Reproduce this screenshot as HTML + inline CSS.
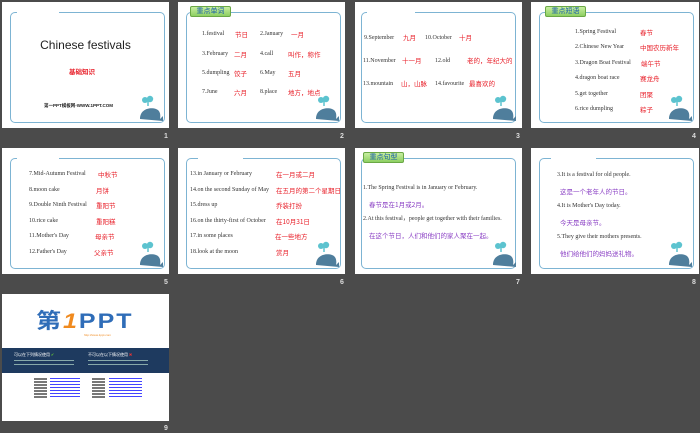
<!DOCTYPE html><html><head><meta charset="utf-8"><style>
*{margin:0;padding:0;box-sizing:border-box}
body{width:700px;height:433px;background:#4b4b4b;position:relative;overflow:hidden;font-family:"Liberation Serif","Noto Sans CJK SC",serif}
.s{position:absolute;width:167px;height:126px;background:#fff}
.f{position:absolute;left:8px;top:10px;width:155px;height:111px;border:1px solid #7db4d3;border-radius:5px}
.gap{position:absolute;left:15px;top:9px;width:42px;height:3px;background:#fff}
.n{position:absolute;color:#ddd;font:bold 7px "Liberation Sans",sans-serif}
.t{position:absolute;font-size:6px;line-height:1;color:#333;white-space:nowrap}
.r{position:absolute;font-size:6.5px;line-height:1;color:#e8202a;white-space:nowrap;font-family:"Noto Sans CJK SC",sans-serif}
.p{position:absolute;font-size:6.5px;line-height:1;color:#8a3fc4;white-space:nowrap;font-family:"Noto Sans CJK SC",sans-serif}
.tag{position:absolute;left:12px;top:4px;width:41px;height:11px;background:linear-gradient(#c8eea0,#8dcf62);border:1px solid #6aa845;border-radius:2px;font:7px/9px "Noto Sans CJK SC",sans-serif;color:#1a5fa8;text-align:center}
.w{position:absolute;left:134px;top:93px}
</style></head><body>
<svg width="0" height="0" style="position:absolute"><defs><g id="wh"><path d="M4 24 C4 14 14 12 20 14 C26 16 24 24 24 24 L27 21 L27 26 Z M4 24 L24 24" fill="#4f7e9c"/><path d="M12 11 L12 6" stroke="#5cc3cf" stroke-width="1.5"/><circle cx="9" cy="5" r="3" fill="#5cc3cf"/><circle cx="14" cy="4" r="3.2" fill="#5cc3cf"/></g></defs></svg>

<div class="s" style="left:2px;top:2px"><div class="f"></div><div class="gap"></div>
<div style="position:absolute;left:0;width:167px;top:36px;text-align:center;font:12px 'Liberation Sans',sans-serif;color:#222">Chinese festivals</div>
<div class="r" style="left:67px;top:66px;font-weight:bold">基础知识</div>
<div style="position:absolute;left:42px;top:101px;font:bold 4.5px 'Liberation Sans','Noto Sans CJK SC',sans-serif;color:#222">第一PPT模板网-WWW.1PPT.COM</div>
<svg class="w" width="30" height="28"><use href="#wh"/></svg></div>
<div class="n" style="left:164px;top:133px">1</div>

<div class="s" style="left:178px;top:2px"><div class="f"></div><div class="tag">重点单词</div>
<div class="t" style="left:24px;top:29px">1.festival</div><div class="r" style="left:57px;top:29px">节日</div>
<div class="t" style="left:82px;top:29px">2.January</div><div class="r" style="left:113px;top:29px">一月</div>
<div class="t" style="left:24px;top:49px">3.February</div><div class="r" style="left:56px;top:49px">二月</div>
<div class="t" style="left:82px;top:49px">4.call</div><div class="r" style="left:110px;top:49px">叫作，称作</div>
<div class="t" style="left:24px;top:68px">5.dumpling</div><div class="r" style="left:56px;top:68px">饺子</div>
<div class="t" style="left:82px;top:68px">6.May</div><div class="r" style="left:110px;top:68px">五月</div>
<div class="t" style="left:24px;top:87px">7.June</div><div class="r" style="left:56px;top:87px">六月</div>
<div class="t" style="left:82px;top:87px">8.place</div><div class="r" style="left:110px;top:87px">地方，地点</div>
<svg class="w" width="30" height="28"><use href="#wh"/></svg></div>
<div class="n" style="left:340px;top:133px">2</div>

<div class="s" style="left:355px;top:2px"><div class="f" style="left:6px"></div><div class="gap" style="left:12px;width:48px"></div>
<div class="t" style="left:9px;top:33px">9.September</div><div class="r" style="left:48px;top:32px">九月</div>
<div class="t" style="left:70px;top:33px">10.October</div><div class="r" style="left:104px;top:32px">十月</div>
<div class="t" style="left:8px;top:56px">11.November</div><div class="r" style="left:47px;top:55px">十一月</div>
<div class="t" style="left:80px;top:56px">12.old</div><div class="r" style="left:112px;top:55px">老的，年纪大的</div>
<div class="t" style="left:8px;top:79px">13.mountain</div><div class="r" style="left:46px;top:78px">山，山脉</div>
<div class="t" style="left:80px;top:79px">14.favourite</div><div class="r" style="left:114px;top:78px">最喜欢的</div>
<svg class="w" width="30" height="28"><use href="#wh"/></svg></div>
<div class="n" style="left:516px;top:133px">3</div>

<div class="s" style="left:531px;top:2px;width:168px"><div class="f"></div><div class="tag" style="left:14px">重点短语</div>
<div class="t" style="left:44px;top:27px">1.Spring Festival</div><div class="r" style="left:109px;top:27px">春节</div>
<div class="t" style="left:44px;top:42px">2.Chinese New Year</div><div class="r" style="left:109px;top:42px">中国农历新年</div>
<div class="t" style="left:44px;top:58px">3.Dragon Boat Festival</div><div class="r" style="left:110px;top:58px">端午节</div>
<div class="t" style="left:44px;top:73px">4.dragon boat race</div><div class="r" style="left:109px;top:73px">赛龙舟</div>
<div class="t" style="left:44px;top:89px">5.get together</div><div class="r" style="left:109px;top:89px">团聚</div>
<div class="t" style="left:44px;top:104px">6.rice dumpling</div><div class="r" style="left:109px;top:104px">粽子</div>
<svg class="w" width="30" height="28"><use href="#wh"/></svg></div>
<div class="n" style="left:692px;top:133px">4</div>

<div class="s" style="left:2px;top:148px"><div class="f"></div><div class="gap"></div>
<div class="t" style="left:27px;top:23px">7.Mid-Autumn Festival</div><div class="r" style="left:96px;top:23px">中秋节</div>
<div class="t" style="left:27px;top:39px">8.moon cake</div><div class="r" style="left:94px;top:39px">月饼</div>
<div class="t" style="left:27px;top:54px">9.Double Ninth Festival</div><div class="r" style="left:94px;top:54px">重阳节</div>
<div class="t" style="left:27px;top:70px">10.rice cake</div><div class="r" style="left:94px;top:70px">重阳糕</div>
<div class="t" style="left:27px;top:85px">11.Mother's Day</div><div class="r" style="left:93px;top:85px">母亲节</div>
<div class="t" style="left:27px;top:101px">12.Father's Day</div><div class="r" style="left:92px;top:101px">父亲节</div>
<svg class="w" width="30" height="28"><use href="#wh"/></svg></div>
<div class="n" style="left:164px;top:279px">5</div>

<div class="s" style="left:178px;top:148px"><div class="f"></div><div class="gap" style="left:20px;width:45px"></div>
<div class="t" style="left:12px;top:23px">13.in January or February</div><div class="r" style="left:98px;top:23px">在一月或二月</div>
<div class="t" style="left:12px;top:39px">14.on the second Sunday of May</div><div class="r" style="left:98px;top:39px">在五月的第二个星期日</div>
<div class="t" style="left:12px;top:54px">15.dress up</div><div class="r" style="left:98px;top:54px">乔装打扮</div>
<div class="t" style="left:12px;top:70px">16.on the thirty-first of October</div><div class="r" style="left:98px;top:70px">在10月31日</div>
<div class="t" style="left:12px;top:85px">17.in some places</div><div class="r" style="left:97px;top:85px">在一些地方</div>
<div class="t" style="left:12px;top:101px">18.look at the moon</div><div class="r" style="left:98px;top:101px">赏月</div>
<svg class="w" width="30" height="28"><use href="#wh"/></svg></div>
<div class="n" style="left:340px;top:279px">6</div>

<div class="s" style="left:355px;top:148px"><div class="f" style="left:6px"></div><div class="tag" style="left:8px">重点句型</div>
<div class="t" style="left:8px;top:37px">1.The Spring Festival is in January or February.</div>
<div class="p" style="left:14px;top:53px">春节是在1月或2月。</div>
<div class="t" style="left:8px;top:68px">2.At this festival，people get together with their families.</div>
<div class="p" style="left:14px;top:84px">在这个节日，人们和他们的家人聚在一起。</div>
<svg class="w" width="30" height="28"><use href="#wh"/></svg></div>
<div class="n" style="left:516px;top:279px">7</div>

<div class="s" style="left:531px;top:148px;width:168px"><div class="f"></div><div class="gap" style="left:20px;width:45px"></div>
<div class="t" style="left:26px;top:24px">3.It is a  festival for old people.</div>
<div class="p" style="left:29px;top:40px">这是一个老年人的节日。</div>
<div class="t" style="left:26px;top:55px">4.It is Mother's Day today.</div>
<div class="p" style="left:29px;top:71px">今天是母亲节。</div>
<div class="t" style="left:26px;top:86px">5.They give their mothers presents.</div>
<div class="p" style="left:29px;top:102px">他们给他们的妈妈送礼物。</div>
<svg class="w" width="30" height="28"><use href="#wh"/></svg></div>
<div class="n" style="left:692px;top:279px">8</div>

<div class="s" style="left:2px;top:294px;height:127px">
<div style="position:absolute;left:34px;top:17px;font:bold 25px/1 'Liberation Sans','Noto Sans CJK SC',sans-serif;color:#2f6db8;letter-spacing:2px;transform:scaleY(0.85);transform-origin:top">第<span style="color:#f08a1e;font-style:italic">1</span>PPT</div>
<div style="position:absolute;left:82px;top:39px;font:3px sans-serif;color:#f08a1e">http://www.1ppt.com</div>
<div style="position:absolute;left:0;top:54px;width:167px;height:25px;background:#1e3a5f"></div>
<div style="position:absolute;left:12px;top:58px;font:4px 'Noto Sans CJK SC',sans-serif;color:#fff">可以在下列情况使用 <span style="color:#6c3">✔</span></div>
<div style="position:absolute;left:86px;top:58px;font:4px 'Noto Sans CJK SC',sans-serif;color:#fff">不可以在以下情况使用 <span style="color:#e33">✖</span></div>
<div style="position:absolute;left:12px;top:66px;width:60px;height:1px;background:#8aa;box-shadow:0 4px 0 #8aa"></div>
<div style="position:absolute;left:86px;top:66px;width:60px;height:1px;background:#8aa;box-shadow:0 4px 0 #8aa"></div>
<div style="position:absolute;left:32px;top:84px;width:13px;height:20px;background:repeating-linear-gradient(#777 0 2px,#fff 2px 3px)"></div>
<div style="position:absolute;left:48px;top:84px;width:30px;height:20px;background:repeating-linear-gradient(#44f 0 1px,#fff 1px 3px)"></div>
<div style="position:absolute;left:90px;top:84px;width:13px;height:20px;background:repeating-linear-gradient(#777 0 2px,#fff 2px 3px)"></div>
<div style="position:absolute;left:107px;top:84px;width:33px;height:20px;background:repeating-linear-gradient(#44f 0 1px,#fff 1px 3px)"></div>
</div>
<div class="n" style="left:164px;top:425px">9</div>
</body></html>
